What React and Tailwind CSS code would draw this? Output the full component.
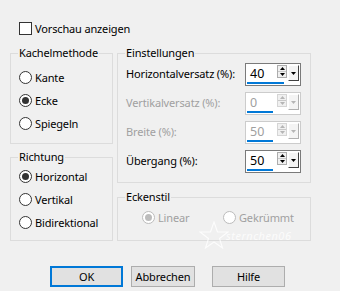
import React from "react";

const FONT = "font-['Noto_Sans',sans-serif]";

function Radio({ checked, disabled, label, labelClass = "" }) {
  const ring = disabled ? "border-[#bcbcbc]" : "border-[#333333]";
  const dot = disabled ? "bg-[#bcbcbc]" : "bg-[#333333]";
  return (
    <div className="flex items-center h-[23px]">
      <div className={`w-[13px] h-[13px] rounded-full border ${ring} bg-white flex items-center justify-center`}>
        {checked && <div className={`w-[7px] h-[7px] rounded-full ${dot}`} />}
      </div>
      <span className={`ml-[3px] leading-[15px] whitespace-nowrap ${disabled ? "text-[#a0a0a0]" : "text-black"} ${labelClass}`}>{label}</span>
    </div>
  );
}

function Group({ label, className = "", children }) {
  return (
    <div className={`relative border border-[#dcdcdc] ${className}`}>
      <span className="absolute top-[-9px] left-[7px] px-[1px] bg-[#f0f0f0] leading-[16px] text-black whitespace-nowrap">{label}</span>
      {children}
    </div>
  );
}

function Tri({ dir, color }) {
  return (
    <svg width="5" height="3" viewBox="0 0 5 3">
      {dir === "up" ? <polygon points="2.5,0 5,3 0,3" fill={color} /> : <polygon points="0,0 5,0 2.5,3" fill={color} />}
    </svg>
  );
}

function Spin({ value, bar, disabled }) {
  const arrow = disabled ? "#b5b5b5" : "#000000";
  return (
    <div className={`w-[56px] h-[23px] border ${disabled ? "border-[#cccccc]" : "border-[#7a7a7a]"} bg-white flex flex-col pt-[1px] px-[1px]`}>
      <div className="flex h-[16px]">
        <div className={`w-[30px] pl-[3px] leading-[18px] text-[12.5px] tracking-normal ${disabled ? "text-[#a0a0a0]" : "text-black"}`}>{value}</div>
        <div className={`w-[11px] ml-[1px] h-[13px] flex flex-col border ${disabled ? "border-[#d5d5d5]" : "border-[#acacac]"} bg-[#f0f0f0]`}>
          <div className="h-[6px] flex items-center justify-center border-b border-[#c8c8c8]"><Tri dir="up" color={arrow} /></div>
          <div className="flex-1 flex items-center justify-center"><Tri dir="down" color={arrow} /></div>
        </div>
        <div className={`w-[11px] h-[16px] ml-[1px] bg-[#f4f4f4] border-t border-l border-white border-r ${disabled ? "border-r-[#b0b0b0] border-b-[#b0b0b0]" : "border-r-[#404040] border-b-[#404040]"} border-b flex items-center justify-center`}>
          <Tri dir="down" color={arrow} />
        </div>
      </div>
      <div className="h-[2px] mt-[1px] bg-[#0078d7]" style={{ width: bar }} />
    </div>
  );
}

function SpinRow({ label, value, bar, disabled }) {
  return (
    <div className="flex items-center h-[23px]">
      <span className={`w-[119px] leading-[15px] -mt-[2px] whitespace-nowrap ${disabled ? "text-[#a0a0a0]" : "text-black"}`}>{label}</span>
      <Spin value={value} bar={bar} disabled={disabled} />
    </div>
  );
}

function Button({ label, primary, w }) {
  return (
    <div className={`${w} h-[21px] flex items-center justify-center bg-[#e1e1e1] ${primary ? "border-2 border-[#0078d7]" : "border border-[#adadad]"} leading-[15px] text-black whitespace-nowrap`}>
      {label}
    </div>
  );
}

export default function App() {
  return (
    <div className={`relative w-[340px] h-[291px] bg-[#f0f0f0] ${FONT} text-[11px] tracking-[-0.15px] text-black flex flex-col overflow-hidden`}>
      <div className="flex items-center h-[13px] mt-[22px] ml-[19px]">
        <div className="w-[13px] h-[13px] border border-[#333333] bg-white" />
        <span className="ml-[3px] leading-[15px]">Vorschau anzeigen</span>
      </div>

      <div className="flex mt-[18px] ml-[10px] gap-[4px]">
        <div className="w-[103px] flex flex-col gap-[13px]">
          <Group label="Kachelmethode" className="h-[91px] pt-[12px] pl-[8px]">
            <Radio label="Kante" />
            <Radio label="Ecke" checked />
            <Radio label="Spiegeln" />
          </Group>
          <Group label="Richtung" className="h-[84px] pt-[7px] pl-[8px]">
            <Radio label="Horizontal" checked />
            <Radio label="Vertikal" />
            <Radio label="Bidirektional" />
          </Group>
        </div>
        <div className="w-[194px] flex flex-col gap-[14px]">
          <Group label="Einstellungen" className="h-[130px] pt-[9px] pl-[8px] flex flex-col gap-[6px]">
            <SpinRow label="Horizontalversatz (%):" value="40" bar="37px" />
            <SpinRow label="Vertikalversatz (%):" value="0" bar="26px" disabled />
            <SpinRow label="Breite (%):" value="50" bar="26px" disabled />
            <SpinRow label="Übergang (%):" value="50" bar="26px" />
          </Group>
          <Group label="Eckenstil" className="h-[44px] pt-[8px] pl-[24px] flex">
            <div className="w-[81px]"><Radio label="Linear" checked disabled /></div>
            <Radio label="Gekrümmt" disabled />
          </Group>
        </div>
      </div>

      <div className="flex mt-[25px] ml-[50px]">
        <Button label="OK" primary w="w-[73px]" />
        <div className="ml-[8px]"><Button label="Abbrechen" w="w-[64px]" /></div>
        <div className="ml-[17px]"><Button label="Hilfe" w="w-[73px]" /></div>
      </div>

      <div className="absolute left-[199px] top-[221px] flex items-end opacity-80 pointer-events-none">
        <svg width="30" height="28" viewBox="0 0 30 28">
          <polygon points="15,1 18.5,11 29,11 20.5,17.5 23.5,27 15,21 6.5,27 9.5,17.5 1,11 11.5,11" fill="none" stroke="#ffffff" strokeWidth="1.2" />
        </svg>
        <span className="italic text-[11px] leading-[14px] text-white tracking-[0.5px] -ml-[3px] mb-[6px]">sternchen06</span>
      </div>
    </div>
  );
}
